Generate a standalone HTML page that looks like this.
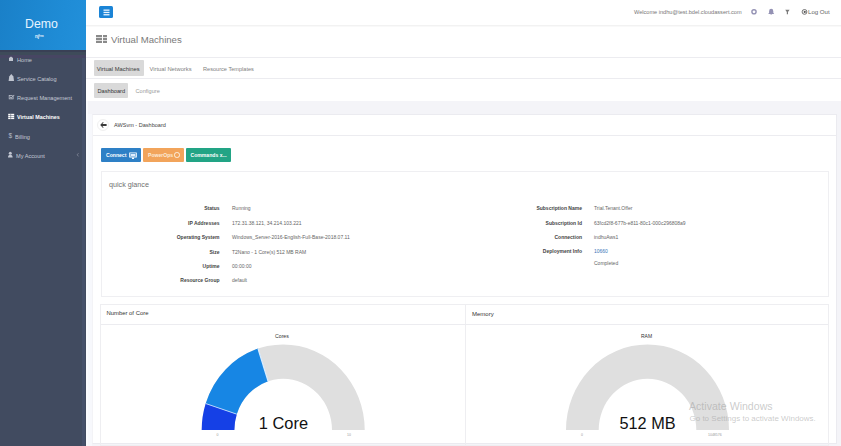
<!DOCTYPE html>
<html><head><meta charset="utf-8">
<style>
*{margin:0;padding:0;box-sizing:border-box}
html,body{width:841px;height:446px;overflow:hidden;background:#fff;font-family:"Liberation Sans",sans-serif;color:#333}
.a{position:absolute;white-space:nowrap;line-height:10px;height:10px}
#side{position:absolute;left:0;top:0;width:86px;height:446px;background:#414b60}
#logo{position:absolute;left:0;top:0;width:86px;height:50px;background:linear-gradient(100deg,#1a80c8,#1f8cd6 70%,#2290da)}
.nav{position:absolute;left:0;width:86px;height:10px;line-height:10px;font-size:5.6px;color:#c4c9d4;white-space:nowrap}
.nav i{position:absolute;left:8px;top:0;font-style:normal}
.nav span{position:absolute;left:17px;top:0}
.hl{position:absolute;height:1px;background:#ececf0}
.lbl{position:absolute;font-size:5px;font-weight:bold;color:#444;text-align:right;white-space:nowrap;line-height:10px;height:10px}
.val{position:absolute;font-size:5px;color:#666;white-space:nowrap;line-height:10px;height:10px}
.btn{position:absolute;top:148px;height:14px;border-radius:1px;color:#fff;font-size:5.1px;font-weight:bold;line-height:14px;white-space:nowrap}
</style></head><body>
<div id="side">
  <div style="position:absolute;left:82px;top:58px;width:3px;height:388px;background:#45506a"></div>
  <div id="logo">
    <div class="a" style="left:25px;top:16.5px;font-size:12.3px;line-height:14px;height:14px;color:#e6f4ff">Demo</div>
    <div class="a" style="left:35px;top:32px;font-size:4.6px;font-weight:bold;color:#e8f4ff">nj&#x1D47;&#x1D50;</div>
  </div>
  <div style="position:absolute;left:0;top:50px;width:86px;height:8px;background:linear-gradient(#394055 0 2.5px,#3e4b5a 2.5px 5.5px,#474663 5.5px 8px)"></div>
  <div class="nav" style="top:54.8px"><span>Home</span></div>
  <div class="nav" style="top:74px"><span>Service Catalog</span></div>
  <div class="nav" style="top:92.8px"><span>Request Management</span></div>
  <div class="nav" style="top:112.2px;color:#fff;font-weight:bold;font-size:5.4px"><span>Virtual Machines</span></div>
  <div class="nav" style="top:131.6px"><span style="left:15px">Billing</span></div>
  <div class="nav" style="top:150.5px"><span style="left:16px">My Account</span></div>
  <svg style="position:absolute;left:0;top:-0.6px" width="86" height="170" viewBox="0 0 86 170">
    <g fill="#c0c5d0">
      <path d="M9 62 V59 L11 57.6 L13 59 V62 Z"/>
      <path d="M8.6 82 L9.2 77.5 L11.3 75 L13.4 77.5 L14 82 Z"/>
      <path d="M8.8 96 H12.6 V96.7 H9.5 V99.5 H12.8 V97.8 L13.5 97.2 V100.2 H8.8 Z M10.2 97.6 L11.1 98.6 L14 95.8 L14.5 96.3 L11.1 99.6 L9.7 98.1 Z"/>
      <text x="8.4" y="139" font-size="6.5" font-family="Liberation Sans" fill="#b4bac8">$</text>
      <circle cx="10.3" cy="154.2" r="1.5"/>
      <path d="M8 158.6 Q8 155.8 10.3 155.8 Q12.6 155.8 12.6 158.6 Z"/>
      <path d="M78.5 154.2 L77.2 155.8 L78.5 157.4" fill="none" stroke="#9aa0ae" stroke-width="0.6"/>
    </g>
    <g fill="#fff">
      <rect x="8.2" y="114.8" width="6" height="1.6"/><rect x="8.2" y="116.8" width="6" height="1.4"/><rect x="8.2" y="118.6" width="6" height="1.5"/>
    </g>
    <rect x="10.6" y="114.8" width="0.5" height="5.3" fill="#414b60"/>
  </svg>
</div>

<!-- top header -->
<div style="position:absolute;left:99px;top:6px;width:14px;height:12px;background:#1b84d6;border-radius:1.5px"></div>
<svg style="position:absolute;left:103px;top:8.5px" width="7" height="7" viewBox="0 0 7 7"><g fill="#eaf4ff"><rect x="0.5" y="0.5" width="6" height="1.3"/><rect x="0.5" y="2.8" width="6" height="1.3"/><rect x="0.5" y="5.1" width="6" height="1.3"/></g></svg>
<div class="hl" style="left:86px;width:755px;top:24.5px;height:1.5px;background:#f2f2f2"></div><div class="hl" style="left:86px;width:755px;top:26px;background:#f9f9f9"></div>
<div class="a" style="left:634px;top:7px;font-size:5.6px;color:#777">Welcome indhu@test.bdel.cloudassert.com</div>
<svg style="position:absolute;left:750px;top:8px" width="60" height="8" viewBox="0 0 60 8">
<circle cx="4" cy="3.8" r="2.1" fill="none" stroke="#9492b4" stroke-width="1.4"/>
<path d="M21.2 0.8 Q23.3 0.8 23.3 3.2 L23.3 4.8 L24.2 6 L18.2 6 L19.1 4.8 L19.1 3.2 Q19.1 0.8 21.2 0.8 Z M20.2 6.4 L22.2 6.4 Q21.2 7.6 20.2 6.4 Z" fill="#9492b4"/>
<path d="M35.2 1.8 L39.6 1.8 L38 4 L38 6.2 L36.8 6.2 L36.8 4 Z" fill="#7b7b7b"/>
<circle cx="54.5" cy="3.9" r="2.4" fill="none" stroke="#666" stroke-width="0.9"/>
<path d="M53.8 2.6 L56.8 3.9 L53.8 5.2 Z" fill="#555"/>
</svg>
<div class="a" style="left:808px;top:7px;font-size:6.1px;color:#666">Log Out</div>

<!-- title -->
<svg style="position:absolute;left:96px;top:35px" width="11" height="8" viewBox="0 0 11 8"><g fill="#8a8a8a"><rect x="0" y="0" width="6" height="2.2"/><rect x="7" y="0" width="4" height="2.2"/><rect x="0" y="2.9" width="6" height="2.2"/><rect x="7" y="2.9" width="4" height="2.2"/><rect x="0" y="5.8" width="6" height="2.2"/><rect x="7" y="5.8" width="4" height="2.2"/></g></svg>
<div class="a" style="left:111px;top:34px;font-size:9.6px;line-height:12px;height:12px;color:#7a7a7a">Virtual Machines</div>
<div class="hl" style="left:86px;width:755px;top:56.5px"></div>

<!-- tabs -->
<div style="position:absolute;left:94px;top:60px;width:50px;height:16px;background:#d9d9d9;border-radius:1px"></div>
<div class="a" style="left:96.8px;top:63.5px;font-size:5.8px;color:#3a3a3a">Virtual Machines</div>
<div class="a" style="left:149.5px;top:63.5px;font-size:5.8px;color:#808080">Virtual Networks</div>
<div class="a" style="left:203px;top:63.5px;font-size:5.6px;color:#808080">Resource Templates</div>
<div class="hl" style="left:86px;width:755px;top:78px"></div>
<div style="position:absolute;left:94px;top:83px;width:34px;height:15px;background:#d9d9d9;border-radius:1px"></div>
<div class="a" style="left:97.5px;top:85.5px;font-size:5.65px;color:#333">Dashboard</div>
<div class="a" style="left:135.5px;top:85.5px;font-size:5.6px;color:#999">Configure</div>

<!-- grey content area -->
<div style="position:absolute;left:86px;top:101px;width:755px;height:345px;background:#f4f4f8"></div>
<div style="position:absolute;left:92px;top:114px;width:745px;height:330px;background:#fff;border:1px solid #ebebf0;border-left-color:#f3f3f6"></div>
<div style="position:absolute;left:86px;top:101px;width:2px;height:345px;background:#fafbfe"></div>
<div style="position:absolute;left:88px;top:114px;width:4px;height:332px;background:#f7f8fc"></div>
<div style="position:absolute;left:97px;top:119px;width:12px;height:12px;border-radius:6px;border:1px solid #f0f0f0"></div>
<svg style="position:absolute;left:100px;top:122px" width="7" height="6" viewBox="0 0 7 6"><path d="M0.2 3 L3 0.1 L3.6 0.7 L2.2 2.1 L6.6 2.1 L6.6 3.9 L2.2 3.9 L3.6 5.3 L3 5.9 Z" fill="#3a3a3a"/></svg>
<div class="a" style="left:114px;top:120px;font-size:5.56px;color:#444">AWSvm - Dashboard</div>
<div class="hl" style="left:93px;width:743px;top:134.5px"></div>

<!-- buttons -->
<div class="btn" style="left:101px;width:40px;background:#2e80c6"><span style="position:absolute;left:5px">Connect</span><svg style="position:absolute;left:28px;top:3.5px" width="8" height="8" viewBox="0 0 8 8"><path d="M0.6 0.4 H7.4 Q7.8 0.4 7.8 0.8 V5.2 Q7.8 5.6 7.4 5.6 H0.6 Q0.2 5.6 0.2 5.2 V0.8 Q0.2 0.4 0.6 0.4 Z M1.2 1.3 V4.6 H6.8 V1.3 Z" fill="#fff"/><rect x="1.6" y="1.9" width="4.8" height="2.2" fill="#dfeeff"/><path d="M3.3 5.6 H4.7 L5.2 7 H2.8 Z" fill="#fff"/></svg></div>
<div class="btn" style="left:143px;width:41px;background:#f2a45b;color:#fcecd9"><span style="position:absolute;left:5px">PowerOps</span><span style="position:absolute;left:31px;top:4.3px;width:5.6px;height:5.6px;border:1.8px solid #fdf0e0;border-radius:50%"></span></div>
<div class="btn" style="left:186px;width:45px;background:#22a485"><span style="position:absolute;left:4.5px">Commands x...</span></div>

<!-- quick glance -->
<div style="position:absolute;left:101px;top:171px;width:728px;height:126px;border:1px solid #efeff2"></div>
<div class="a" style="left:109px;top:180px;font-size:7.2px;color:#707070">quick glance</div>

<div class="lbl" style="right:621.5px;top:203px">Status</div>
<div class="lbl" style="right:621.5px;top:218px">IP Addresses</div>
<div class="lbl" style="right:621.5px;top:232px">Operating System</div>
<div class="lbl" style="right:621.5px;top:247px">Size</div>
<div class="lbl" style="right:621.5px;top:261px">Uptime</div>
<div class="lbl" style="right:621.5px;top:275px">Resource Group</div>
<div class="val" style="left:232px;top:203px">Running</div>
<div class="val" style="left:232px;top:218px">172.31.38.121, 34.214.103.221</div>
<div class="val" style="left:232px;top:232px">Windows_Server-2016-English-Full-Base-2018.07.11</div>
<div class="val" style="left:232px;top:247px">T2Nano - 1 Core(s) 512 MB RAM</div>
<div class="val" style="left:232px;top:261px">00:00:00</div>
<div class="val" style="left:232px;top:275px">default</div>

<div class="lbl" style="right:259px;top:203px">Subscription Name</div>
<div class="lbl" style="right:259px;top:218px">Subscription Id</div>
<div class="lbl" style="right:259px;top:232px">Connection</div>
<div class="lbl" style="right:259px;top:246.2px">Deployment Info</div>
<div class="val" style="left:594px;top:203px">Trial.Tenant.Offer</div>
<div class="val" style="left:594px;top:218px">63fcd2f8-677b-e811-80c1-000c296808a9</div>
<div class="val" style="left:594px;top:232px">indhuAws1</div>
<div class="val" style="left:594px;top:246.2px;color:#3a77b8">10660</div>
<div class="val" style="left:594px;top:258px">Completed</div>

<!-- chart panels -->
<div style="position:absolute;left:100px;top:303.5px;width:366px;height:142px;border:1px solid #eeeef1"></div>
<div style="position:absolute;left:465px;top:303.5px;width:364px;height:142px;border:1px solid #eeeef1"></div>
<div class="hl" style="left:101px;width:727px;top:324px"></div>
<div class="a" style="left:106.5px;top:307.8px;font-size:5.9px;color:#333">Number of Core</div>
<div class="a" style="left:472px;top:308.5px;font-size:6px;color:#333">Memory</div>

<svg style="position:absolute;left:0;top:0" width="841" height="446">
  <g transform="translate(283.2,430) scale(1,1.05)">
    <path d="M-81.5 0 A81.5 81.5 0 0 1 81.5 0 L48.8 0 A48.8 48.8 0 0 0 -48.8 0 Z" fill="#dfdfdf"/>
    <path d="M-81.5 0 A81.5 81.5 0 0 1 -77.51 -25.18 L-46.41 -15.08 A48.8 48.8 0 0 0 -48.8 0 Z" fill="#1540e6"/>
    <path d="M-77.51 -25.18 A81.5 81.5 0 0 1 -25.18 -77.51 L-15.08 -46.41 A48.8 48.8 0 0 0 -46.41 -15.08 Z" fill="#1786e4"/>
    <path d="M-77.51 -25.18 L-46.41 -15.08" stroke="#bcd8ff" stroke-width="0.9"/>
    <path d="M-25.18 -77.51 L-15.08 -46.41" stroke="#d8ecff" stroke-width="1.3"/>
  </g>
  <g transform="translate(647.5,430) scale(1,1.05)">
    <path d="M-81.5 0 A81.5 81.5 0 0 1 81.5 0 L48.8 0 A48.8 48.8 0 0 0 -48.8 0 Z" fill="#dfdfdf"/>
  </g>
</svg>
<div class="a" style="left:275px;top:331px;font-size:5.2px;color:#333">Cores</div>
<div class="a" style="left:641px;top:331px;font-size:5px;color:#333">RAM</div>
<div class="a" style="left:258.8px;top:412.6px;font-size:16.4px;line-height:20px;height:20px;color:#111">1 Core</div>
<div class="a" style="left:619.5px;top:412.7px;font-size:16.3px;line-height:20px;height:20px;color:#111">512 MB</div>
<div class="a" style="left:216.5px;top:429.5px;font-size:3.5px;color:#999">0</div>
<div class="a" style="left:347px;top:429.5px;font-size:3.5px;color:#999">10</div>
<div class="a" style="left:581px;top:429.5px;font-size:3.5px;color:#999">0</div>
<div class="a" style="left:708px;top:429.5px;font-size:3.5px;color:#999">1048576</div>

<!-- watermark -->
<div class="a" style="left:689px;top:400px;font-size:10.6px;line-height:12px;height:12px;color:rgba(160,160,160,0.55)">Activate Windows</div>
<div class="a" style="left:689.5px;top:414px;font-size:8px;color:rgba(160,160,160,0.55)">Go to Settings to activate Windows.</div>
</body></html>
